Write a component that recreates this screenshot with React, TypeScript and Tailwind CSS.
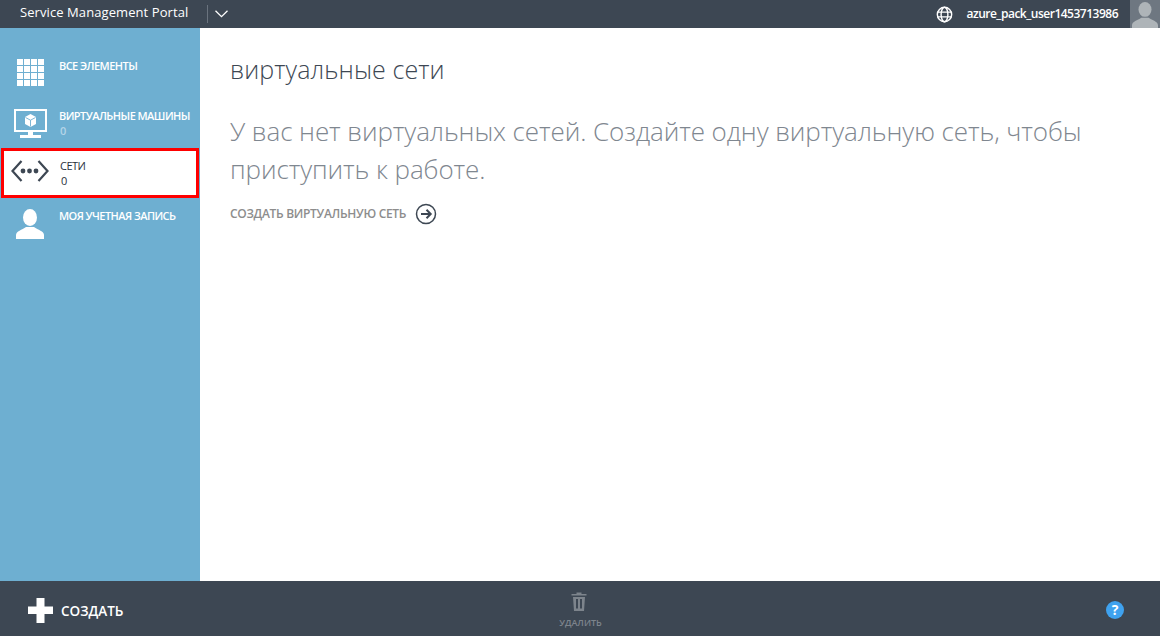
import { CSSProperties, ReactNode } from "react";

const font: CSSProperties = { fontFamily: '"Open Sans", "Noto Sans", sans-serif' };

function GridIcon() {
  const cells = [0, 1, 2, 3];
  return (
    <svg className="mt-[2px]" width="27" height="27" viewBox="0 0 27 27" fill="#fff">
      {cells.map((r) =>
        cells.map((c) => <rect key={`${r}-${c}`} x={c * 7} y={r * 7} width="6" height="6" />),
      )}
    </svg>
  );
}

function MonitorIcon() {
  return (
    <svg className="mt-[2px]" width="33" height="29" viewBox="0 0 33 29">
      <rect x="1" y="1" width="31" height="21" fill="none" stroke="#fff" strokeWidth="2" />
      <path d="M16.5 5 L22 8 V15 L16.5 18 L11 15 V8 Z" fill="#fff" />
      <path d="M11.5 8.5 L16.5 11.2 L21.5 8.5 M16.5 11.2 V17.5" fill="none" stroke="#6eafd1" strokeWidth="0.9" />
      <rect x="14" y="23" width="5" height="3" fill="#fff" />
      <rect x="6" y="26" width="21" height="3" fill="#fff" />
    </svg>
  );
}

function NetworkIcon() {
  return (
    <svg width="38" height="22" viewBox="0 0 38 22" fill="none" stroke="#3d4753" strokeWidth="2.2">
      <path d="M10.5 1 L1.5 11 L10.5 21" />
      <path d="M27.5 1 L36.5 11 L27.5 21" />
      <g fill="#3d4753" stroke="none">
        <circle cx="12" cy="11" r="2.4" />
        <circle cx="18.5" cy="11" r="2.4" />
        <circle cx="25" cy="11" r="2.4" />
      </g>
    </svg>
  );
}

function UserIcon({ color }: { color: string }) {
  return (
    <svg className="mt-[2px]" width="28" height="30" viewBox="0 0 28 30" fill={color}>
      <ellipse cx="14" cy="8.5" rx="7" ry="8.5" />
      <path d="M0 30 V26 C0 22 6 21 10 18 H18 C22 21 28 22 28 26 V30 Z" />
    </svg>
  );
}

function NavItem({
  icon,
  label,
  count,
  active,
}: {
  icon: ReactNode;
  label: string;
  count?: string;
  active?: boolean;
}) {
  return (
    <div
      className={
        active
          ? "flex h-[50px] border-[3px] border-[#fe0000] bg-white text-[#2a323c]"
          : "flex h-[50px] text-white"
      }
    >
      <div className={active ? "flex w-[56px] shrink-0 justify-start pl-[7px] pt-[9px]" : "flex w-[60px] shrink-0 justify-center pt-[9px]"}>
        {icon}
      </div>
      <div className={active ? "pt-[7px] text-[11px] leading-[15px]" : "-ml-px pt-[10px] text-[11px] font-semibold leading-[15px]"}>
        <div className="whitespace-nowrap tracking-[-0.55px]">{label}</div>
        {count && <div className={active ? "pl-px" : "pl-px text-[#b5d5e8]"}>{count}</div>}
      </div>
    </div>
  );
}

export default function App() {
  return (
    <div className="flex h-[636px] w-[1160px] flex-col overflow-hidden bg-white" style={font}>
      <header className="flex h-7 shrink-0 items-center bg-[#3d4753] text-white">
        <span className="ml-5 mb-1 whitespace-nowrap text-[13px] leading-[24px] tracking-[0.08px]">Service Management Portal</span>
        <div className="ml-[19px] h-[18px] w-px bg-[#6a737e]" />
        <svg className="ml-[7px]" width="13" height="8" viewBox="0 0 13 8" fill="none" stroke="#fff" strokeWidth="1.3">
          <path d="M0.5 0.7 L6.5 6.7 L12.5 0.7" />
        </svg>
        <div className="ml-auto flex items-center">
          <svg width="17" height="17" viewBox="0 0 18 18" fill="none" stroke="#fff" strokeWidth="1.5">
            <circle cx="9" cy="9" r="7.6" />
            <ellipse cx="9" cy="9" rx="3.6" ry="7.6" />
            <path d="M1.5 6.5 H16.5 M1.5 11.5 H16.5" />
          </svg>
          <span className="ml-[13px] text-[12px] font-semibold tracking-[-0.5px]">azure_pack_user1453713986</span>
          <div className="ml-[12px] flex h-7 w-[30px] items-end justify-center overflow-hidden bg-[#6e7781]">
            <svg width="26" height="26" viewBox="0 0 28 28" fill="#aeb4b8">
              <ellipse cx="14" cy="8" rx="7" ry="8" />
              <path d="M0 28 V25 C0 21 6 20 10 17 H18 C22 20 28 21 28 25 V28 Z" />
            </svg>
          </div>
        </div>
      </header>

      <div className="flex min-h-0 flex-1">
        <aside className="w-[200px] shrink-0 bg-[#6eafd1] pt-5">
          <NavItem icon={<GridIcon />} label="ВСЕ ЭЛЕМЕНТЫ" />
          <NavItem icon={<MonitorIcon />} label="ВИРТУАЛЬНЫЕ МАШИНЫ" count="0" />
          <div className="px-px">
            <NavItem icon={<NetworkIcon />} label="СЕТИ" count="0" active />
          </div>
          <NavItem icon={<UserIcon color="#fff" />} label="МОЯ УЧЕТНАЯ ЗАПИСЬ" />
        </aside>

        <main className="flex-1 pl-[30px] pt-[24px]">
          <h1 className="text-[25px] font-light leading-[34px] tracking-[0.1px] text-[#3d4753]">виртуальные сети</h1>
          <p className="mt-[26px] w-[880px] text-[26px] font-light leading-[38px] tracking-[-0.09px] text-[#7f8790]">
            У вас нет виртуальных сетей. Создайте одну виртуальную сеть, чтобы приступить к работе.
          </p>
          <div className="mt-[15px] flex items-center gap-[9px] text-[#8d8d8d]">
            <span className="text-[12px] font-semibold tracking-[-0.3px]">СОЗДАТЬ ВИРТУАЛЬНУЮ СЕТЬ</span>
            <svg width="22" height="22" viewBox="0 0 22 22" fill="none" stroke="#3d4753" strokeWidth="1.5">
              <circle cx="11" cy="11" r="9.5" />
              <path d="M6 11 H15.5 M11.5 6.8 L15.7 11 L11.5 15.2" strokeWidth="2" />
            </svg>
          </div>
        </main>
      </div>

      <footer className="grid h-[55px] shrink-0 grid-cols-3 items-center bg-[#3d4753]">
        <div className="flex items-center pl-7 pt-1 text-white">
          <svg width="25" height="25" viewBox="0 0 25 25" fill="#fff">
            <path d="M8.5 0 H16.5 V8.5 H25 V16 H16.5 V25 H8.5 V16 H0 V8.5 H8.5 Z" />
          </svg>
          <span className="ml-2 mt-[2px] text-[13.5px] font-semibold">СОЗДАТЬ</span>
        </div>
        <div className="flex flex-col items-center justify-self-center pl-[1px] pt-[4px] text-[#7d848c]">
          <svg className="mr-[3px]" width="16" height="19" viewBox="0 0 16 19" fill="#7d848c">
            <path d="M5.5 0.5 H10.5 V2 H15.5 V3.5 H0.5 V2 H5.5 Z" />
            <path fillRule="evenodd" d="M2 5 H14 L13 19 H3 Z M5 7 V16.5 H7 V7 Z M9 7 V16.5 H11 V7 Z" />
          </svg>
          <span className="mt-[5px] text-[9px] font-semibold leading-[13px]">УДАЛИТЬ</span>
        </div>
        <div className="flex justify-end pr-[36px] pt-[3px]">
          <div className="flex h-[18px] w-[18px] items-center justify-center rounded-full bg-[#3fa2ef] text-[14px] font-bold leading-none text-white">
            ?
          </div>
        </div>
      </footer>
    </div>
  );
}
